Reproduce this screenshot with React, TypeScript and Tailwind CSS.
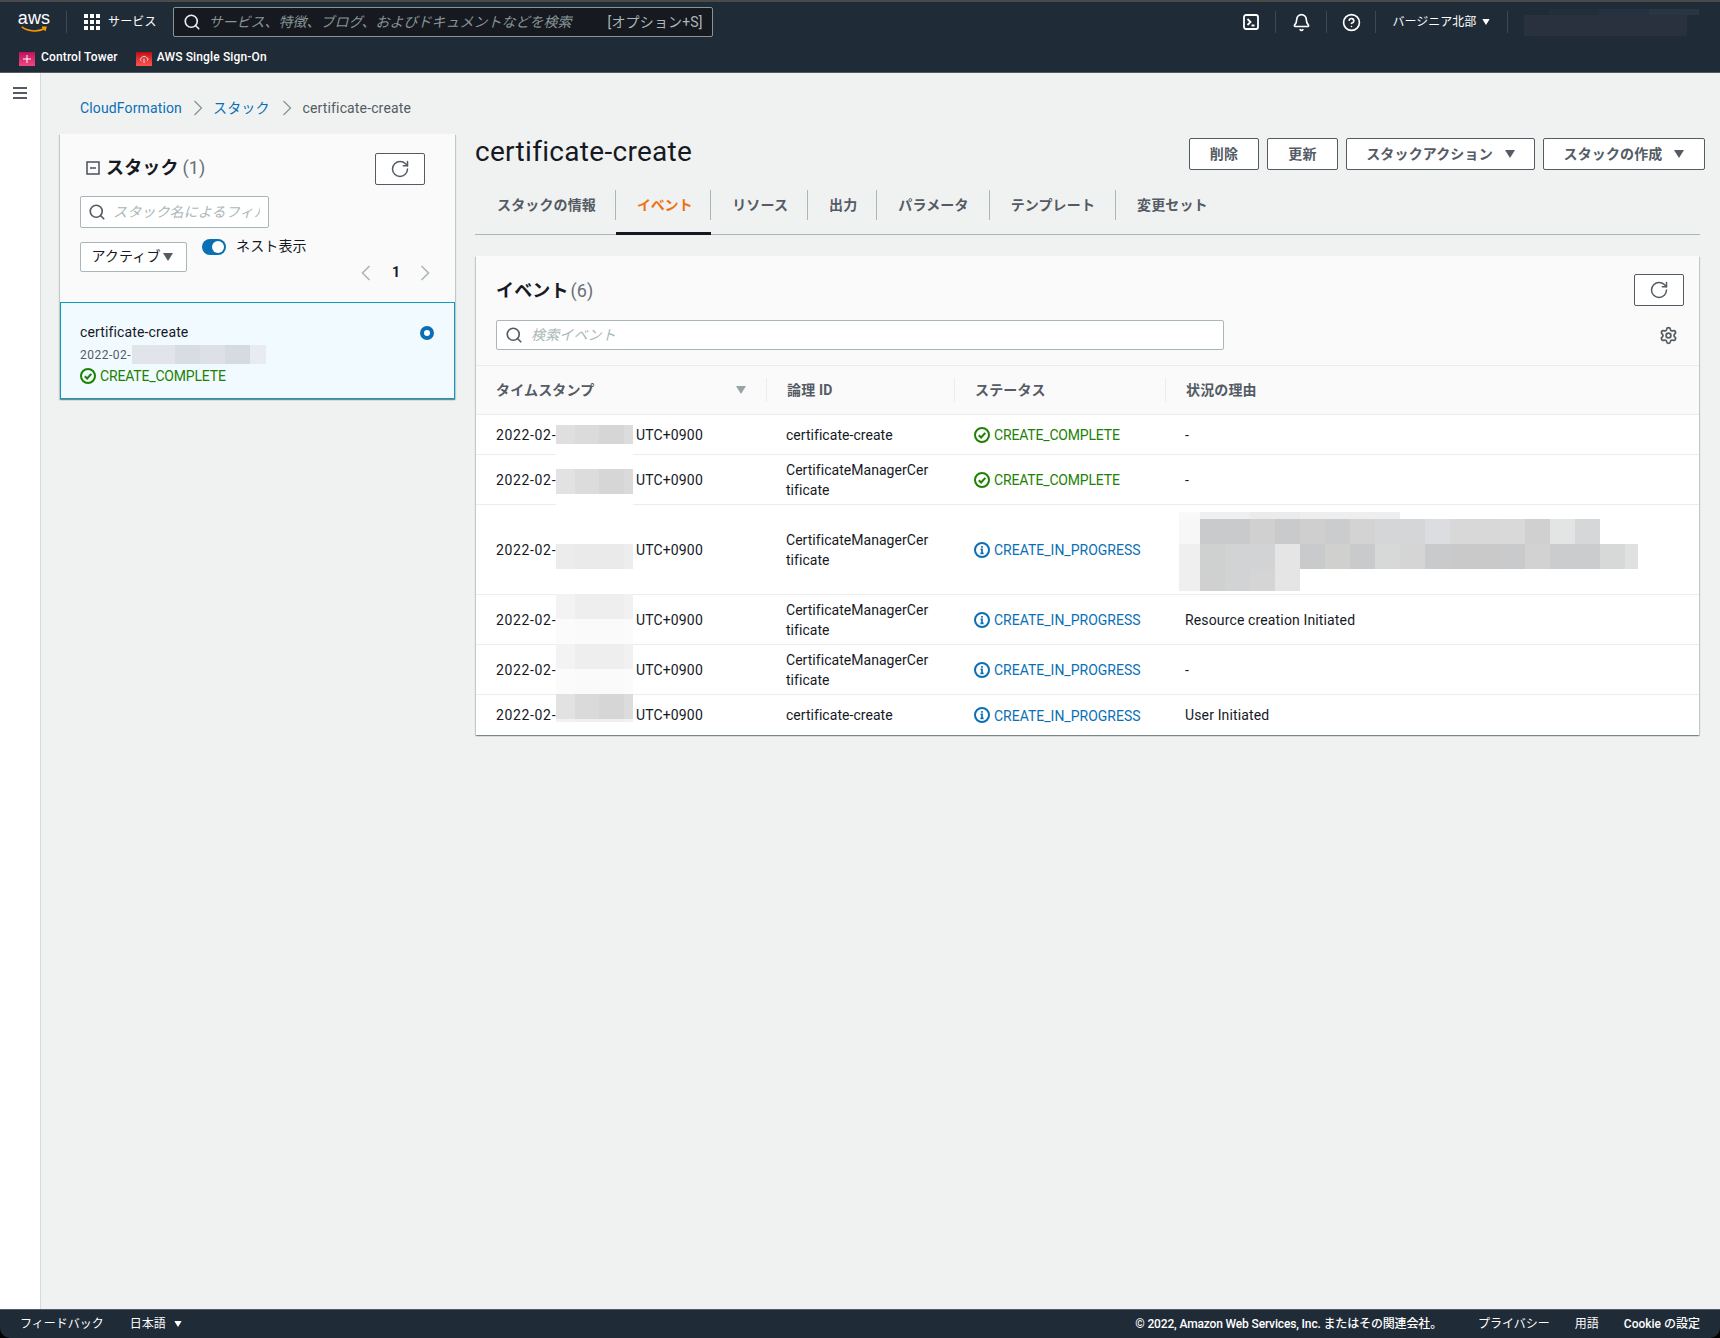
import { Bell, CircleHelp, RotateCw, Search, Settings } from "lucide-react";

const font = "font-['Roboto','Noto_Sans_CJK_JP',sans-serif]";

// mosaic blocks that hide account details in the screenshot
const timeCols = ["w-[19px]", "w-[24px]", "w-[25px]", "w-[9px]"];
const timeBlocks: { h: string; colors: string[] }[] = [
  { h: "h-[19px]", colors: ["bg-[#dfdfdf]", "bg-[#dbdbdb]", "bg-[#d6d6d6]", "bg-[#dcdcdc]"] },
  { h: "h-[25px]", colors: ["bg-[#ffffff]", "bg-[#ffffff]", "bg-[#ffffff]", "bg-[#ffffff]"] },
  { h: "h-[25px]", colors: ["bg-[#e2e2e2]", "bg-[#dcdcdc]", "bg-[#d6d6d6]", "bg-[#dadada]"] },
  { h: "h-[50px]", colors: ["bg-[#ffffff]", "bg-[#ffffff]", "bg-[#ffffff]", "bg-[#ffffff]"] },
  { h: "h-[25px]", colors: ["bg-[#ececec]", "bg-[#eaeaea]", "bg-[#eaeaea]", "bg-[#ededed]"] },
  { h: "h-[25px]", colors: ["bg-[#ffffff]", "bg-[#ffffff]", "bg-[#ffffff]", "bg-[#ffffff]"] },
  { h: "h-[25px]", colors: ["bg-[#f3f3f3]", "bg-[#eeeeee]", "bg-[#eeeeee]", "bg-[#f1f1f1]"] },
  { h: "h-[25px]", colors: ["bg-[#fbfbfb]", "bg-[#fafafa]", "bg-[#fafafa]", "bg-[#fbfbfb]"] },
  { h: "h-[25px]", colors: ["bg-[#f3f3f3]", "bg-[#eeeeee]", "bg-[#eeeeee]", "bg-[#f1f1f1]"] },
  { h: "h-[25px]", colors: ["bg-[#fbfbfb]", "bg-[#fafafa]", "bg-[#fafafa]", "bg-[#fbfbfb]"] },
  { h: "h-[25px]", colors: ["bg-[#e2e2e2]", "bg-[#dadada]", "bg-[#d6d6d6]", "bg-[#dcdcdc]"] },
  { h: "h-[3px]", colors: ["bg-[#f2f2f2]", "bg-[#f0f0f0]", "bg-[#f0f0f0]", "bg-[#f2f2f2]"] },
];

const reasonCells = [
  ["#c9cacb", "#c9cacb", "#d0d0d0", "#c9cacc", "#cfcfd0", "#cbcccd", "#d3d3d3", "#d5d6d7", "#d5d6d7", "#dcdde0", "#d8d8d8", "#d8d8d8", "#d9d9d9", "#d0d0d0", "#e3e4e4", "#d6d7d9"],
  ["#cfd0d0", "#d2d3d4", "#d2d3d4", "#e5e5e5", "#c9cacb", "#d0d0cf", "#c9cacb", "#d7d8d8", "#d5d5d5", "#c9cacc", "#c9c9c9", "#c9c9c9", "#c9cacb", "#d2d2d2", "#cbcccd", "#cbcccd", "#d7d8d8"],
  ["#cfd0cf", "#d2d3d4", "#d5d5d5", "#e5e5e5"],
];

function Cell({ c, className }: { c: string; className: string }) {
  return <div className={className} style={{ background: c }} />;
}

function ReasonMosaic() {
  return (
    <div className="absolute left-[703px] top-[147px] flex flex-col">
      <div className="flex h-[7px]">
        <Cell c="#f9f9f9" className="w-[21px]" />
        <Cell c="#efefef" className="w-[50px]" />
        <Cell c="#ebebeb" className="w-[50px]" />
        <Cell c="#eeeeee" className="w-[100px]" />
      </div>
      <div className="flex h-[25px]">
        <Cell c="#f7f7f7" className="w-[21px]" />
        {reasonCells[0].map((c, i) => (
          <Cell key={i} c={c} className="w-[25px]" />
        ))}
      </div>
      <div className="flex h-[25px]">
        <Cell c="#efefef" className="w-[21px]" />
        {reasonCells[1].map((c, i) => (
          <Cell key={i} c={c} className="w-[25px]" />
        ))}
        <Cell c="#dfe0e0" className="w-[13px]" />
      </div>
      <div className="flex h-[22px]">
        <Cell c="#efefef" className="w-[21px]" />
        {reasonCells[2].map((c, i) => (
          <Cell key={i} c={c} className="w-[25px]" />
        ))}
      </div>
    </div>
  );
}

function TimeMosaic() {
  return (
    <div className="absolute left-[80px] top-[60px] flex flex-col">
      {timeBlocks.map((b, i) => (
        <div key={i} className={`flex ${b.h}`}>
          {b.colors.map((c, j) => (
            <div key={j} className={`${timeCols[j]} ${c}`} />
          ))}
        </div>
      ))}
    </div>
  );
}

function Caret({ className = "" }: { className?: string }) {
  return (
    <svg viewBox="0 0 10 8" className={`h-[8px] w-[10px] ${className}`} fill="currentColor">
      <path d="M0 0h10L5 8z" />
    </svg>
  );
}

function CheckIcon() {
  return (
    <svg viewBox="0 0 16 16" className="h-[16px] w-[16px] shrink-0" fill="none" stroke="#1d8102" strokeWidth="2">
      <circle cx="8" cy="8" r="7" />
      <path d="M4.8 8.2l2.3 2.3 4.2-4.6" />
    </svg>
  );
}

function InfoIcon() {
  return (
    <svg viewBox="0 0 16 16" className="h-[16px] w-[16px] shrink-0" fill="none" stroke="#0a6fb5" strokeWidth="2">
      <circle cx="8" cy="8" r="7" />
      <path d="M6.6 7.3H8v4M6.4 11.3h3.2M8 4v1.8" strokeWidth="1.7" />
    </svg>
  );
}

function Status({ kind }: { kind: "done" | "progress" }) {
  return kind === "done" ? (
    <div className="flex items-center gap-[4px] tracking-[-0.17px] text-[#1d8102]">
      <CheckIcon />
      <span className="translate-y-[1px]">CREATE_COMPLETE</span>
    </div>
  ) : (
    <div className="flex items-center gap-[4px] tracking-normal text-[#0a6fb5]">
      <InfoIcon />
      <span className="translate-y-[1px]">CREATE_IN_PROGRESS</span>
    </div>
  );
}

function OutlineButton({ children, className = "" }: { children: React.ReactNode; className?: string }) {
  return (
    <button className={`flex h-[32px] items-center justify-center rounded-[2px] border border-[#545b64] bg-white text-[14px] font-bold text-[#545b64] ${className}`}>
      {children}
    </button>
  );
}

function NavSep() {
  return <div className="h-[22px] w-px bg-[#414750]" />;
}

const tabs = [
  { label: "スタックの情報", pad: "pl-[22px] pr-[19px]" },
  { label: "イベント", pad: "pl-[21px] pr-[18px] tracking-[-0.2px]" },
  { label: "リソース", pad: "pl-[21px] pr-[19px]" },
  { label: "出力", pad: "pl-[21px] pr-[19px]" },
  { label: "パラメータ", pad: "pl-[21px] pr-[20px]" },
  { label: "テンプレート", pad: "pl-[21px] pr-[20px]" },
  { label: "変更セット", pad: "pl-[21px] pr-[20px]" },
];

const rows: { id: string[]; kind: "done" | "progress"; reason: string; h: string }[] = [
  { id: ["certificate-create"], kind: "done", reason: "-", h: "h-[40px]" },
  { id: ["CertificateManagerCer", "tificate"], kind: "done", reason: "-", h: "h-[50px]" },
  { id: ["CertificateManagerCer", "tificate"], kind: "progress", reason: "", h: "h-[90px]" },
  { id: ["CertificateManagerCer", "tificate"], kind: "progress", reason: "Resource creation Initiated", h: "h-[50px]" },
  { id: ["CertificateManagerCer", "tificate"], kind: "progress", reason: "-", h: "h-[50px]" },
  { id: ["certificate-create"], kind: "progress", reason: "User Initiated", h: "h-[41px]" },
];

export default function App() {
  return (
    <div className={`flex h-[1338px] w-[1720px] flex-col overflow-hidden bg-black text-[14px] tracking-[0.14px] text-[#16191f] ${font}`}>
      {/* top nav */}
      <header className="h-[73px] shrink-0 border-t-2 border-b border-t-[#4a4a4a] border-b-[#545b64] bg-[#202b38] text-white">
        <div className="flex h-[40px] items-center">
          <div className="ml-[19px] flex w-[30px] flex-col items-center">
            <span className="font-['Liberation_Sans',sans-serif] text-[18px] leading-[15px]">aws</span>
            <svg viewBox="0 0 30 8" className="h-[7px] w-[30px]" fill="none" stroke="#ff9900" strokeWidth="1.8">
              <path d="M1 1c8 6 20 6 27 1M24 1.5l4.5 0-1 4" />
            </svg>
          </div>
          <div className="ml-[17px]">
            <NavSep />
          </div>
          <svg viewBox="0 0 16 16" className="ml-[17px] h-[16px] w-[16px]" fill="#fff">
            {[0, 6, 12].map((x) =>
              [0, 6, 12].map((y) => <rect key={`${x}-${y}`} x={x} y={y} width="4" height="4" />),
            )}
          </svg>
          <span className="ml-[8px] text-[12px]">サービス</span>
          <div className="ml-[16px] flex h-[30px] w-[540px] items-center rounded-[2px] border border-[#879596] bg-[#16191f]">
            <Search size={18} strokeWidth={2.2} className="ml-[9px] text-[#eaeded]" />
            <span className="ml-[8px] text-[14px] italic tracking-normal text-[#879596]">サービス、特徴、ブログ、およびドキュメントなどを検索</span>
            <span className="ml-auto mr-[9px] text-[14px] text-[#aab7b8]">[オプション+S]</span>
          </div>
          <svg viewBox="0 0 16 16" className="ml-[530px] h-[16px] w-[16px]" fill="none" stroke="#fff" strokeWidth="1.8">
            <rect x="1" y="1" width="14" height="14" rx="2" />
            <path d="M4.5 5l3 3-3 3M8.5 11.5h3" />
          </svg>
          <div className="ml-[16px]">
            <NavSep />
          </div>
          <Bell size={19} strokeWidth={2.1} className="ml-[16px]" />
          <div className="ml-[15px]">
            <NavSep />
          </div>
          <CircleHelp size={19} strokeWidth={2.1} className="ml-[15px]" />
          <div className="ml-[14px]">
            <NavSep />
          </div>
          <span className="ml-[17px] text-[12px] tracking-normal">バージニア北部</span>
          <Caret className="ml-[5px] scale-75" />
          <div className="ml-[16px]">
            <NavSep />
          </div>
          <div className="ml-[10px] flex flex-col">
            <div className="flex h-[6px]">
              <div className="h-full w-[31px] bg-[#202b38]" />
              <div className="h-full w-[50px] bg-[#232e3b]" />
              <div className="h-full w-[50px] bg-[#253040]" />
              <div className="h-full w-[50px] bg-[#2a3543]" />
            </div>
            <div className="flex h-[21px]">
              <div className="h-full w-[6px] bg-[#202b38]" />
              <div className="h-full w-[163px] bg-[#29303e]" />
            </div>
          </div>
        </div>
        <div className="flex h-[30px] items-start pl-[19px] text-[12px] font-medium">
          <div className="mt-[10px] flex h-[14px] w-[16px] items-center justify-center bg-gradient-to-b from-[#bd0f5c] to-[#f34482]">
            <svg viewBox="0 0 16 14" className="h-[14px] w-[16px]" fill="none" stroke="#fff" strokeWidth="1">
              <path d="M8 3v8M4 7h8" />
            </svg>
          </div>
          <span className="ml-[6px] mt-[5px] leading-[20px]">Control Tower</span>
          <div className="ml-[18px] mt-[10px] flex h-[14px] w-[16px] items-center justify-center bg-gradient-to-b from-[#bd0816] to-[#ff5252]">
            <svg viewBox="0 0 16 14" className="h-[14px] w-[16px]" fill="none" stroke="#fff" strokeWidth="0.8">
              <path d="M5.5 9a1.6 1.6 0 01.2-3.1A2.6 2.6 0 0110.4 5.6a1.7 1.7 0 01.4 3.3M8 6.5V11" />
            </svg>
          </div>
          <span className="ml-[5px] mt-[5px] leading-[20px]">AWS Single Sign-On</span>
        </div>
      </header>

      {/* body */}
      <div className="flex min-h-0 flex-1 bg-[#f0f2f1]">
        <aside className="w-[41px] shrink-0 border-r border-[#d5dbdb] bg-white pl-[13px] pt-[14px]">
          <div className="flex w-[14px] flex-col gap-[3px]">
            <div className="h-[2px] bg-[#545b64]" />
            <div className="h-[2px] bg-[#545b64]" />
            <div className="h-[2px] bg-[#545b64]" />
          </div>
        </aside>

        <main className="min-w-0 flex-1 pl-[19px] pr-[20px] pt-[25px]">
          {/* breadcrumb */}
          <div className="ml-[20px] flex h-[20px] items-center text-[14px]">
            <span className="text-[#0a6fb5]">CloudFormation</span>
            <svg viewBox="0 0 10 16" className="ml-[11px] h-[16px] w-[10px]" fill="none" stroke="#879596" strokeWidth="1.3">
              <path d="M1.5 1l7 7-7 7" />
            </svg>
            <span className="ml-[10px] text-[#0a6fb5]">スタック</span>
            <svg viewBox="0 0 10 16" className="ml-[12px] h-[16px] w-[10px]" fill="none" stroke="#879596" strokeWidth="1.3">
              <path d="M1.5 1l7 7-7 7" />
            </svg>
            <span className="ml-[11px] text-[#545b64]">certificate-create</span>
          </div>

          <div className="mt-[16px] flex gap-[20px]">
            {/* stacks panel */}
            <section className="h-[265px] w-[395px] shrink-0 bg-[#fafafa] shadow-[0_1px_1px_0_rgba(0,28,36,0.3),1px_1px_1px_0_rgba(0,28,36,0.15),-1px_1px_1px_0_rgba(0,28,36,0.15)]">
              <div className="relative h-[168px] px-[20px] pt-[19px]">
                <div className="flex items-start justify-between pr-[10px]">
                  <div className="ml-[6px] mt-[-4px] flex h-[36px] items-center">
                    <svg viewBox="0 0 14 14" className="h-[14px] w-[14px] translate-y-[1px]" fill="none" stroke="#545b64" strokeWidth="1.6">
                      <rect x="1" y="1" width="12" height="12" />
                      <path d="M4 7h6" />
                    </svg>
                    <span className="ml-[6px] text-[18px] font-bold">スタック</span>
                    <span className="ml-[4px] text-[18px] text-[#687078]">(1)</span>
                  </div>
                  <OutlineButton className="w-[50px]">
                    <RotateCw size={20} strokeWidth={1.8} />
                  </OutlineButton>
                </div>
                <div className="mt-[11px] flex h-[32px] w-[189px] items-center rounded-[2px] border border-[#aab7b8] bg-white">
                  <Search size={18} strokeWidth={2.2} className="ml-[7px] shrink-0 text-[#545b64]" />
                  <div className="ml-[7px] mr-[8px] min-w-0 flex-1 overflow-hidden whitespace-nowrap text-[14px] italic text-[#aab7b8]">スタック名によるフィルタ</div>
                </div>
                <div className="mt-[14px] flex items-start">
                  <div className="flex h-[30px] w-[107px] items-center justify-center gap-[2px] rounded-[2px] border border-[#aab7b8] bg-white pb-[1px] pr-[3px] text-[14px]">
                    アクティブ
                    <Caret className="text-[#545b64]" />
                  </div>
                  <div className="relative ml-[15px] mt-[-3px] h-[16px] w-[24px] rounded-full bg-[#0a6fb5]">
                    <div className="absolute right-[2px] top-[2px] h-[12px] w-[12px] rounded-full bg-white" />
                  </div>
                  <span className="ml-[10px] mt-[-5px] text-[14px] leading-[18px]">ネスト表示</span>
                </div>
                <div className="absolute right-[25px] top-[128px] flex items-center text-[14px] font-bold">
                  <svg viewBox="0 0 10 16" className="h-[16px] w-[10px]" fill="none" stroke="#aab7b8" strokeWidth="1.6">
                    <path d="M8.5 1l-7 7 7 7" />
                  </svg>
                  <span className="mx-[21px] w-[7px]">1</span>
                  <svg viewBox="0 0 10 16" className="h-[16px] w-[10px]" fill="none" stroke="#aab7b8" strokeWidth="1.6">
                    <path d="M1.5 1l7 7-7 7" />
                  </svg>
                </div>
              </div>
              <div className="relative h-[97px] border border-[#0a9cc5] bg-[#f1faff] pl-[19px] pt-[19px]">
                <div className="leading-[20px]">certificate-create</div>
                <div className="mt-[3px] flex h-[19px] items-center text-[12px] text-[#545b64]">
                  <span className="w-[52px] whitespace-nowrap tracking-[0.5px]">2022-02-</span>
                  <div className="flex h-[19px]">
                    <div className="w-[43px] bg-[#e1e4e9]" />
                    <div className="w-[25px] bg-[#d8dce3]" />
                    <div className="w-[25px] bg-[#dde1e7]" />
                    <div className="w-[25px] bg-[#d6dbe2]" />
                    <div className="w-[16px] bg-[#e8ecf2]" />
                  </div>
                </div>
                <div className="mt-[1px]">
                  <Status kind="done" />
                </div>
                <div className="absolute right-[20px] top-[23px] h-[14px] w-[14px] rounded-full border-[4px] border-[#0a6fb5] bg-white" />
              </div>
            </section>

            {/* detail */}
            <section className="min-w-0 flex-1">
              <div className="flex h-[56px] items-start justify-between">
                <h1 className="mt-[1px] text-[28px] font-normal leading-[34px] tracking-[0.3px]">certificate-create</h1>
                <div className="-mr-[5px] mt-[4px] flex gap-[8px]">
                  <OutlineButton className="w-[70px]">削除</OutlineButton>
                  <OutlineButton className="w-[71px]">更新</OutlineButton>
                  <OutlineButton className="w-[189px] gap-[12px]">
                    スタックアクション
                    <Caret />
                  </OutlineButton>
                  <OutlineButton className="w-[162px] gap-[12px]">
                    スタックの作成
                    <Caret />
                  </OutlineButton>
                </div>
              </div>

              <div className="flex h-[45px] border-b border-[#aab7b8]">
                {tabs.map((t, i) => (
                  <div key={t.label} className={`h-[45px] border-b-[3px] ${i === 1 ? "border-[#16191f]" : "border-transparent"}`}>
                    <div
                      className={`flex h-[30px] items-center text-[14px] font-bold ${t.pad} ${i === 6 ? "" : "border-r border-[#aab7b8]"} ${i === 1 ? "text-[#ec7211]" : "text-[#545b64]"}`}
                    >
                      {t.label}
                    </div>
                  </div>
                ))}
              </div>

              {/* events */}
              <div className="relative mx-[1px] mt-[21px] h-[479px] bg-white shadow-[0_1px_1px_0_rgba(0,28,36,0.3),1px_1px_1px_0_rgba(0,28,36,0.15),-1px_1px_1px_0_rgba(0,28,36,0.15)]">
                <div className="relative h-[109px] bg-[#fafafa] pl-[20px]">
                  <div className="flex h-[64px] items-center pt-[4px]">
                    <span className="text-[18px] font-bold">イベント</span>
                    <span className="ml-[2px] text-[18px] text-[#687078]">(6)</span>
                  </div>
                  <div className="flex h-[30px] w-[728px] items-center rounded-[2px] border border-[#aab7b8] bg-white">
                    <Search size={18} strokeWidth={2.2} className="ml-[8px] text-[#545b64]" />
                    <span className="ml-[8px] text-[14px] italic text-[#aab7b8]">検索イベント</span>
                  </div>
                  <OutlineButton className="absolute right-[15px] top-[18px] w-[50px]">
                    <RotateCw size={20} strokeWidth={1.8} />
                  </OutlineButton>
                  <Settings size={19} strokeWidth={2.2} className="absolute right-[21px] top-[70px] text-[#545b64]" />
                </div>

                <table className="w-full table-fixed border-collapse text-left">
                  <colgroup>
                    <col className="w-[290px]" />
                    <col className="w-[188px]" />
                    <col className="w-[211px]" />
                    <col />
                  </colgroup>
                  <thead>
                    <tr className="h-[49px] border-y border-[#eaeded] bg-[#fafafa] text-[14px] font-bold text-[#545b64]">
                      <th className="pl-[20px] pr-[20px]">
                        <div className="flex items-center justify-between font-bold">
                          タイムスタンプ
                          <Caret className="text-[#95a5a6]" />
                        </div>
                      </th>
                      <th className="font-bold">
                        <div className="flex h-[24px] items-center border-l border-[#eaeded] pl-[20px]">論理 ID</div>
                      </th>
                      <th className="font-bold">
                        <div className="flex h-[24px] items-center border-l border-[#eaeded] pl-[20px]">ステータス</div>
                      </th>
                      <th className="font-bold">
                        <div className="flex h-[24px] items-center border-l border-[#eaeded] pl-[20px]">状況の理由</div>
                      </th>
                    </tr>
                  </thead>
                  <tbody>
                    {rows.map((r, i) => (
                      <tr key={i} className={`${r.h} ${i < rows.length - 1 ? "border-b border-[#eaeded]" : ""}`}>
                        <td className="pl-[20px] leading-[20px]">
                          <div className="flex whitespace-nowrap">
                            <span className="w-[60px] tracking-[0.65px]">2022-02-</span>
                            <span className="ml-[80px]">UTC+0900</span>
                          </div>
                        </td>
                        <td className="pl-[20px] leading-[20px] tracking-[0.04px]">
                          {r.id.map((l) => (
                            <div key={l}>{l}</div>
                          ))}
                        </td>
                        <td className="pl-[20px]">
                          <Status kind={r.kind} />
                        </td>
                        <td className="pl-[20px] leading-[20px]">{r.reason}</td>
                      </tr>
                    ))}
                  </tbody>
                </table>
                <div className="absolute left-0 top-[109px]">
                  <TimeMosaic />
                  <ReasonMosaic />
                </div>
              </div>
            </section>
          </div>
        </main>
      </div>

      {/* footer */}
      <footer className="flex h-[29px] shrink-0 items-center rounded-b-[10px] border-t border-[#545b64] bg-[#202b38] pl-[20px] pr-[20px] text-[12px] tracking-normal text-white">
        <span>フィードバック</span>
        <span className="ml-[26px]">日本語</span>
        <Caret className="ml-[7px] scale-75" />
        <span className="ml-auto font-medium tracking-[-0.15px]">© 2022, Amazon Web Services, Inc. またはその関連会社。</span>
        <span className="ml-[36px]">プライバシー</span>
        <span className="ml-[25px]">用語</span>
        <span className="ml-[25px] font-medium">Cookie の設定</span>
      </footer>
    </div>
  );
}
